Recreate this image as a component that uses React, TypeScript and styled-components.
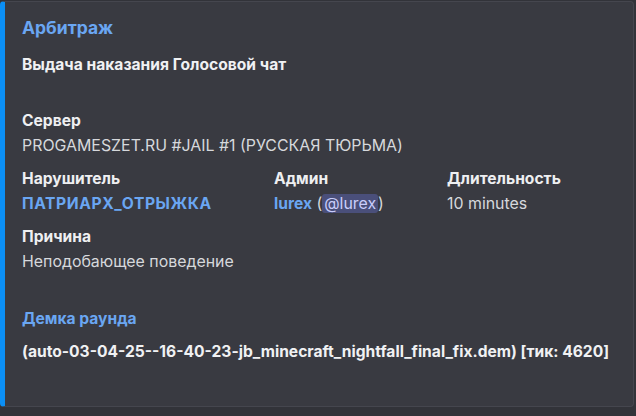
import styled, { createGlobalStyle } from 'styled-components';

const GlobalStyle = createGlobalStyle`
  html, body {
    margin: 0;
    padding: 0;
    background: #323339;
  }
  body {
    width: 636px;
    height: 416px;
    overflow: hidden;
    font-family: Inter, 'Noto Sans', sans-serif;
    -webkit-font-smoothing: antialiased;
  }
`;

type Field = {
  name: string;
  value: React.ReactNode;
  inline?: boolean;
};

export default function App() {
  const fields: Field[] = [
    { name: 'Сервер', value: 'PROGAMESZET.RU #JAIL #1 (РУССКАЯ ТЮРЬМА)' },
    {
      name: 'Нарушитель',
      value: <SLink $wide>ПАТРИАРХ_ОТРЫЖКА</SLink>,
      inline: true,
    },
    {
      name: 'Админ',
      value: (
        <>
          <SLink>lurex</SLink> (<SMention>@lurex</SMention>)
        </>
      ),
      inline: true,
    },
    { name: 'Длительность', value: '10 minutes', inline: true },
    { name: 'Причина', value: 'Неподобающее поведение' },
  ];

  return (
    <>
      <GlobalStyle />
      <SEmbed>
        <STitle>Арбитраж</STitle>
        <SDescription>Выдача наказания Голосовой чат</SDescription>
        <SFields>
          {fields.map((f) => (
            <SField key={f.name} $inline={f.inline}>
              <SFieldName>{f.name}</SFieldName>
              <SFieldValue>{f.value}</SFieldValue>
            </SField>
          ))}
        </SFields>
        <SDemo>
          <SDemoName>Демка раунда</SDemoName>
          <SDemoValue>
            (auto-03-04-25--16-40-23-jb_minecraft_nightfall_final_fix.dem) [тик: 4620]
          </SDemoValue>
        </SDemo>
      </SEmbed>
    </>
  );
}

const SEmbed = styled.div`
  box-sizing: border-box;
  width: 634px;
  height: 406px;
  margin-top: 1px;
  background: #393a41;
  border: 1px solid #45464e;
  border-left: 5px solid #0b8ff5;
  border-radius: 4px;
  padding: 14px 16px 0 17px;
  display: flex;
  flex-direction: column;
`;

const STitle = styled.div`
  font-size: 17.5px;
  line-height: 24px;
  font-weight: 700;
  color: #6aa6f2;
`;

const SDescription = styled.div`
  margin-top: 14px;
  font-size: 15.6px;
  line-height: 22px;
  font-weight: 700;
  color: #f0f1f3;
  padding-bottom: 22px;
`;

const SFields = styled.div`
  margin-top: 12px;
  display: grid;
  grid-template-columns: 252px 173px 1fr;
  row-gap: 11px;
`;

const SField = styled.div<{ $inline?: boolean }>`
  grid-column: ${(p) => (p.$inline ? 'auto' : '1 / -1')};
  display: flex;
  flex-direction: column;
  gap: 3px;
`;

const SFieldName = styled.div`
  font-size: 15.6px;
  line-height: 22px;
  font-weight: 700;
  color: #eeeff1;
`;

const SFieldValue = styled.div`
  font-size: 15.9px;
  line-height: 22px;
  font-weight: 400;
  color: #d6d8dc;
  white-space: nowrap;
`;

const SLink = styled.span<{ $wide?: boolean }>`
  color: #6aa6f2;
  font-weight: 700;
  font-size: 15.6px;
  letter-spacing: ${(p) => (p.$wide ? '0.6px' : '0')};
`;

const SMention = styled.span`
  background: #4a4f7a;
  color: #c9cdfb;
  border-radius: 3px;
  padding: 0 2px;
`;

const SDemo = styled.div`
  margin-top: 35px;
  display: flex;
  flex-direction: column;
  gap: 11px;
`;

const SDemoName = styled.div`
  font-size: 15.6px;
  line-height: 22px;
  font-weight: 700;
  color: #6aa6f2;
`;

const SDemoValue = styled.div`
  font-size: 15.6px;
  line-height: 22px;
  font-weight: 700;
  color: #f0f1f3;
  white-space: nowrap;
`;
